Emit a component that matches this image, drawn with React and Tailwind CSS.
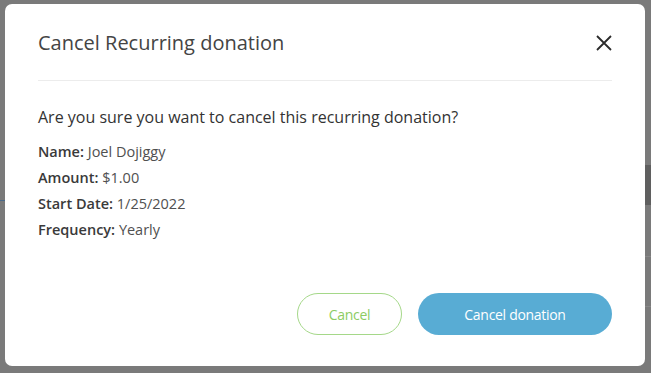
import React from 'react';

const Detail = ({ label, value }) => (
  <p className="h-[26px] leading-[26px] text-[14.5px] text-[#505050]">
    <span className="font-semibold text-[#3a3a3a]">{label}:</span> {value}
  </p>
);

export default function App() {
  return (
    <div
      className="relative w-[651px] h-[373px] overflow-hidden bg-[#7a7a7a]"
      style={{ fontFamily: '"Open Sans", "Liberation Sans", sans-serif' }}
    >
      {/* page behind the overlay */}
      <div className="absolute right-0 top-[165px] w-[10px] h-[40px] bg-[#5f5f5f]" />
      <div className="absolute left-0 top-[200px] w-[6px] h-px bg-[#4a6a8a]" />
      <div className="absolute right-0 top-[256px] w-[8px] h-px bg-[#888]" />
      <div className="absolute right-0 top-[306px] w-[8px] h-px bg-[#888]" />

      <div className="absolute left-[5px] top-[4px] w-[640px] h-[362px] bg-white rounded-[7px] px-[33px] pt-[25px] flex flex-col">
        <div className="flex items-center justify-between h-[28px]">
          <h2 className="text-[20px] leading-[28px] text-[#444]">Cancel Recurring donation</h2>
          <button className="mr-[-2px] w-[20px] h-[20px] flex items-center justify-center text-[#2b2b2b]">
            <svg width="18" height="18" viewBox="0 0 18 18" fill="none" stroke="currentColor" strokeWidth="1.8">
              <path d="M2 2L16 16M16 2L2 16" />
            </svg>
          </button>
        </div>
        <div className="mt-[23px] border-t border-[#ececec]" />

        <p className="mt-[24px] text-[16px] leading-[24px] text-[#333]">
          Are you sure you want to cancel this recurring donation?
        </p>
        <div className="mt-[10px] flex flex-col">
          <Detail label="Name" value="Joel Dojiggy" />
          <Detail label="Amount" value="$1.00" />
          <Detail label="Start Date" value="1/25/2022" />
          <Detail label="Frequency" value="Yearly" />
        </div>

        <div className="mt-[50px] flex justify-end gap-[16px]">
          <button className="w-[105px] h-[42px] rounded-full border border-[#a5d889] text-[#8ccc63] text-[14px] tracking-[-0.3px]">
            Cancel
          </button>
          <button className="w-[194px] h-[42px] rounded-full bg-[#58acd4] text-white text-[14px] tracking-[-0.3px]">
            Cancel donation
          </button>
        </div>
      </div>
    </div>
  );
}
